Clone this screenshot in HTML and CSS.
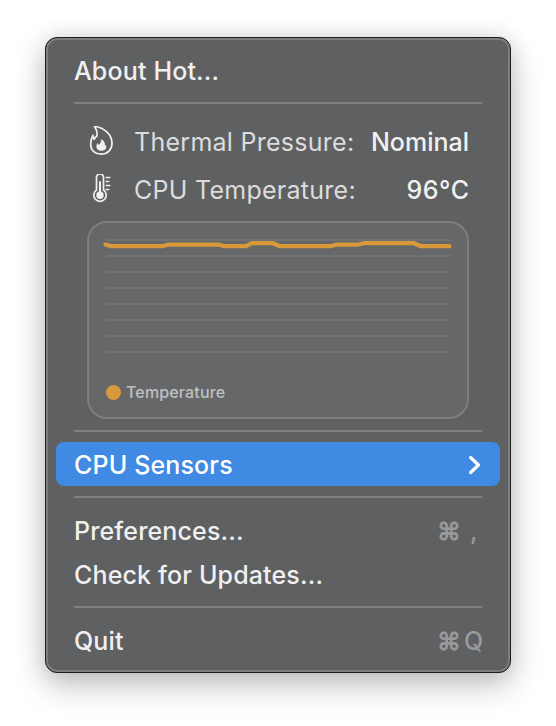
FILE: index.html
```
<!DOCTYPE html>
<html lang="en">
<head>
  <meta charset="UTF-8" />
  <meta name="viewport" content="width=device-width, initial-scale=1.0" />
  <title>Hot</title>
  <link rel="stylesheet" href="styles.css">
</head>
<body>
  <div class="menu">
    <div class="item"><span>About Hot...</span></div>
    <div class="separator"></div>
    <div class="status">
      <div class="row">
        <svg class="icon" width="30" height="32" viewBox="0.3 1 30 32" fill="none" stroke="#f0f0f1" stroke-width="1.7" stroke-linejoin="round">
          <path d="M7.800 1.500C16.500 2.200 25.300 9 25.300 18.500C25.300 24.800 20.800 29.200 14.500 29.200C8.500 29.200 4 25.300 4 19.500C4 16.500 4.500 13.500 6.200 10.300C6.300 12 6.800 13.300 7.400 14.300C8.300 12.800 9 12 10 11.300C11 8 9.800 4.500 7.800 1.500Z" />
          <path fill="#f0f0f1" stroke="none" d="M14.500 14.300C17.500 15.600 18.800 18.800 18 21C18.600 20.800 19 20.200 19.100 19.600C20.500 23 18.600 25.800 14.800 25.800C11.500 25.800 9.600 23.800 9.700 21.200C9.800 19.900 10.200 18.800 10.900 17.900C11.200 18.800 11.600 19.200 12.300 19.700C13.800 18.200 14.800 16.500 14.500 14.300Z" />
        </svg>
        <span class="label">Thermal Pressure:</span>
        <span class="value">Nominal</span>
      </div>
      <div class="row">
        <svg class="icon" width="30" height="32" viewBox="-0.700 2.500 30 32" fill="none" stroke="#f0f0f1" stroke-width="1.7" stroke-linecap="round">
          <path d="M8.800 18.500V5.800a3.500 3.500 0 0 1 7 0V18.500a6.200 6.200 0 1 1-7 0Z" />
          <path stroke-width="2" d="M12.300 10.500V22" />
          <circle cx="12.300" cy="23.700" r="3.700" fill="#f0f0f1" stroke="none" />
          <path stroke-width="1.300" d="M18.400 6h3.800M18.400 10h2.700M18.400 14h3.800M18.400 18h2.700" />
        </svg>
        <span class="label">CPU Temperature:</span>
        <span class="value degrees">96°C</span>
      </div>
      <div class="chart">
        <svg class="plot" width="352" height="122" viewBox="0 0 352 122" fill="none">
          <path stroke="#707173" stroke-width="2" d="M3 4H348M3 20H348M3 36H348M3 52H348M3 68H348M3 84H348M3 100H348M3 116H348" />
          <path stroke="#d9993a" stroke-width="4.200" stroke-linecap="round" stroke-linejoin="round" d="M2.500 8.500L8.500 10.200H59L65 8.700H116L122 10.200H143L149 7.200H170L177 10.200H227L233 8.700H254L261 7.200H311L318 10.200H346.500" />
        </svg>
        <div class="legend"><span class="dot"></span><span>Temperature</span></div>
      </div>
    </div>
    <div class="separator"></div>
    <div class="item selected">
      <span>CPU Sensors</span>
      <svg class="chevron" width="14" height="20" viewBox="0 0 14 20" fill="none" stroke="#fff" stroke-width="3.200" stroke-linecap="round" stroke-linejoin="round"><path d="M2.600 2.500L10.500 10L2.600 17.500" /></svg>
    </div>
    <div class="separator"></div>
    <div class="item"><span>Preferences...</span><span class="shortcut"><span class="cmd">⌘</span><span class="key comma">,</span></span></div>
    <div class="item"><span>Check for Updates...</span></div>
    <div class="separator"></div>
    <div class="item"><span>Quit</span><span class="shortcut"><span class="cmd">⌘</span><span class="key">Q</span></span></div>
  </div>
</body>
</html>
```
FILE: styles.css
```
body {
  margin: 0;
  height: 726px;
  overflow: hidden;
  background: #fff;
  font-family: Inter, "Liberation Sans", sans-serif;
  font-size: 25px;
  color: #f0f0f1;
}
.menu {
  box-sizing: border-box;
  width: 466px;
  height: 636px;
  margin: 37px 0 0 45px;
  padding: 10px;
  border: 1px solid #1c1d1f;
  border-radius: 12px;
  background: #5f6062;
  box-shadow: inset 0 0 0 2px #7d7e80, 0 12px 32px rgba(0, 0, 0, 0.24), 0 0 22px rgba(0, 0, 0, 0.1);
}
.item {
  display: flex;
  align-items: center;
  justify-content: space-between;
  height: 44px;
  padding: 0 18px;
  border-radius: 8px;
  font-weight: 500;
  letter-spacing: 0.15px;
  white-space: nowrap;
}
.item > span {
  padding-top: 2px;
}
.selected {
  background: #408ae4;
  color: #fff;
}
.separator {
  height: 2px;
  margin: 10px 18px;
  background: #7f8082;
}
.status {
  height: 302px;
  padding: 4px 31px 0;
}
.row {
  display: flex;
  align-items: center;
  height: 48px;
}
.icon {
  margin-right: 17px;
}
.label {
  color: #dcdcdd;
  letter-spacing: 0.27px;
}
.value {
  margin-left: auto;
  font-weight: 500;
}
.degrees {
  letter-spacing: 0.5px;
  margin-right: -0.5px;
}
.chart {
  box-sizing: border-box;
  height: 198px;
  margin-top: 7px;
  padding: 13px 14px;
  border: 2px solid #7c7d7f;
  border-radius: 20px;
  background: #666769;
}
.plot {
  display: block;
}
.legend {
  display: flex;
  align-items: center;
  gap: 5px;
  height: 20px;
  margin: 24px 0 0 3px;
  font-size: 16px;
  font-weight: 500;
  letter-spacing: 0.15px;
  color: #c0c0c1;
}
.dot {
  width: 15px;
  height: 15px;
  border-radius: 50%;
  background: #d9993a;
}
.chevron {
  padding-top: 1px;
}
.shortcut {
  display: flex;
  margin-right: -2px;
  color: #98999b;
}
.cmd {
  width: 27px;
  font-weight: 800;
}
.key {
  width: 20px;
}
.comma {
  box-sizing: border-box;
  padding-left: 6px;
}
```
